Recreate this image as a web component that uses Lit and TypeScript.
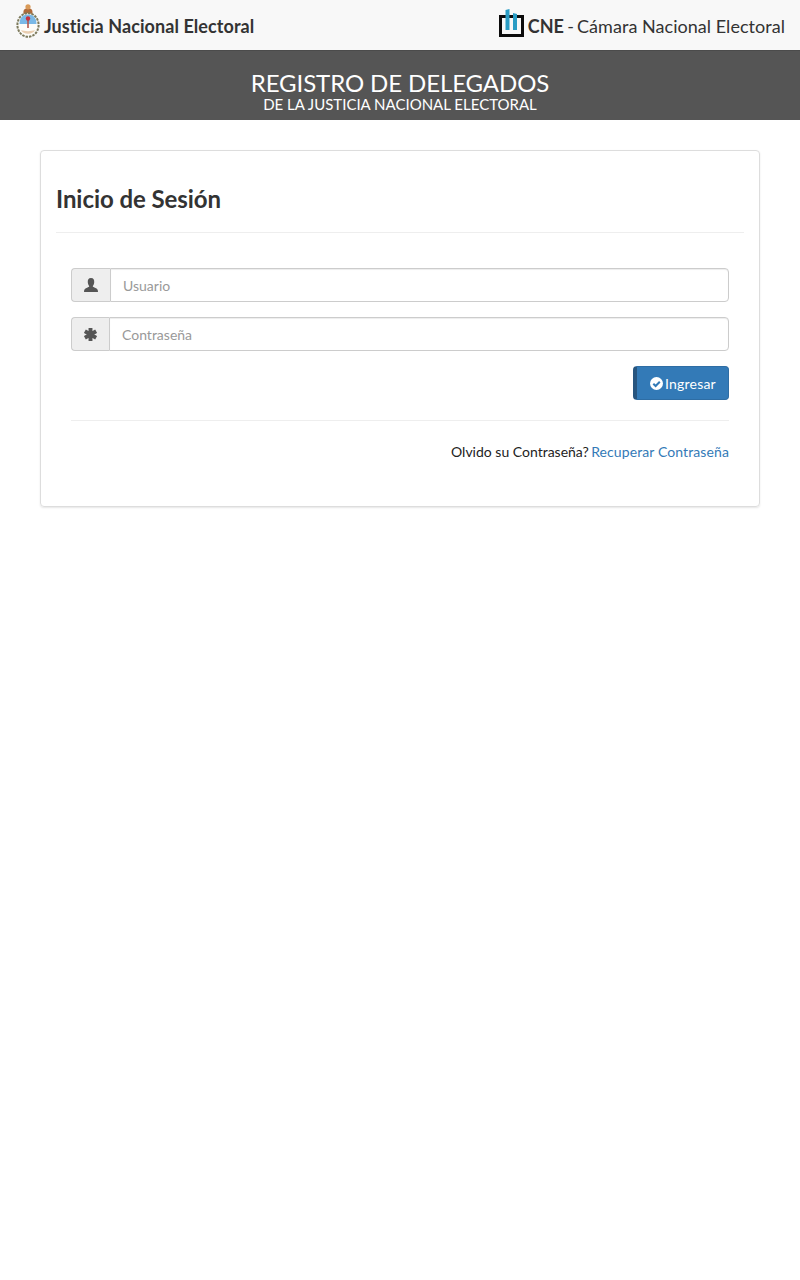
import { LitElement, html, css } from "lit";
import { customElement } from "lit/decorators.js";

@customElement("app-root")
export class AppRoot extends LitElement {
  static styles = css`
    :host { display: block; font-family: Lato, "Liberation Sans", sans-serif; color: #333; background: #fff; min-height: 1280px; font-size: 14px; }
    * { box-sizing: border-box; }
    .top { height: 50px; background: #f8f8f8; display: flex; justify-content: space-between; align-items: center; padding: 0 15px; font-size: 18px; }
    .side { display: flex; align-items: center; }
    .left { gap: 4px; font-weight: 700; margin-top: 1px; padding-left: 1px; letter-spacing: .075px; }
    .left svg { margin-bottom: 9px; }
    .right { gap: 4px; margin-top: 2px; letter-spacing: .04px; }
    .right svg { margin-bottom: 6px; }
    .dash { word-spacing: -1.500px; }
    .banner { height: 70px; background: #555; border-top: 1px solid #4b4b4b; color: #fff; display: flex; flex-direction: column; align-items: center; padding-top: 19px; }
    .b1 { font-size: 24px; line-height: 26px; letter-spacing: -.1px; }
    .b2 { font-size: 15px; line-height: 16px; }
    .card { margin: 30px 40px 0; height: 357px; border: 1px solid #ddd; border-radius: 4px; box-shadow: 0 1px 2px rgba(0,0,0,.1); padding: 0 15px; }
    h1 { margin: 0; height: 82px; padding-top: 33px; font-size: 24px; line-height: 30px; font-weight: 700; border-bottom: 1px solid #eee; color: #333; letter-spacing: -.06px; }
    .form { padding: 35px 15px 0; display: flex; flex-direction: column; }
    .group { display: flex; height: 34px; margin-bottom: 15px; }
    .addon { background: #eee; border: 1px solid #ccc; border-right: 0; border-radius: 4px 0 0 4px; display: flex; align-items: center; justify-content: center; color: #555; }
    .a1 { width: 39px; }
    .a2 { width: 38px; }
    input { flex: 1; min-width: 0; height: 34px; border: 1px solid #ccc; border-radius: 0 4px 4px 0; box-shadow: inset 0 1px 1px rgba(0,0,0,.075); padding: 6px 12px; font: 14px Lato, sans-serif; color: #555; background: #fff; outline: none; }
    input::placeholder { color: #999; opacity: 1; }
    .actions { display: flex; justify-content: flex-end; }
    button { width: 96px; height: 34px; border: 1px solid #2e6da4; border-left: 4px solid #27557f; border-radius: 4px; background: #337ab7; color: #fff; font: 14px Lato, sans-serif; letter-spacing: .2px; display: flex; align-items: center; justify-content: center; gap: 2px; padding: 0 0 0 1px; }
    hr { width: 100%; border: 0; border-top: 1px solid #eee; margin: 20px 0 0; }
    .forgot { text-align: right; margin-top: 21px; line-height: 20px; color: #222; }
    a { color: #337ab7; text-decoration: none; letter-spacing: .1px; margin-left: -1.200px; }
  `;

  render() {
    return html`
      <header class="top">
        <div class="side left">
          <svg width="24" height="34" viewBox="0 0 24 34">
            <path d="M7.500 10 C7 4 9.500 5 12 4 C14.500 5 17 4 16.500 10 Z" fill="#b06a3a"/>
            <circle cx="12" cy="2.800" r="2.600" fill="#d99a58"/>
            <ellipse cx="12" cy="21" rx="10.600" ry="11.800" fill="#fdfcf8" stroke="#7d7a5c" stroke-width="2" stroke-dasharray="2.500 1"/>
            <path d="M3.500 20 C3.500 13.500 7 10.500 12 10.500 C17 10.500 20.500 13.500 20.500 20 Z" fill="#7ab8e6"/>
            <path d="M5 26 C7 31 17 31 19 26 C16 27.500 8 27.500 5 26 Z" fill="#e9cdb0"/>
            <rect x="11.200" y="13" width="1.600" height="11" fill="#b5584a"/>
            <circle cx="12" cy="14.500" r="2.200" fill="#c8303f"/>
          </svg>
          <span>Justicia Nacional Electoral</span>
        </div>
        <div class="side right">
          <svg width="25" height="28" viewBox="0 0 25 28">
            <rect x="1.500" y="7.500" width="22" height="19" fill="none" stroke="#0c0c0c" stroke-width="3"/>
            <path d="M6.500 1 L10.500 0 V21 H6.500 Z" fill="#2a9cc4"/>
            <path d="M14 4 L18 5 V21 H14 Z" fill="#2a9cc4"/>
          </svg>
          <span><b>CNE</b><span class="dash"> - </span>Cámara Nacional Electoral</span>
        </div>
      </header>
      <section class="banner">
        <div class="b1">REGISTRO DE DELEGADOS</div>
        <div class="b2">DE LA JUSTICIA NACIONAL ELECTORAL</div>
      </section>
      <main class="card">
        <h1>Inicio de Sesión</h1>
        <div class="form">
          <div class="group">
            <span class="addon a1">
              <svg width="14" height="14" viewBox="0 0 14 14" fill="#555"><path d="M7 0 C9.500 0 10.500 2 10.200 4.500 C10 6.300 9.300 7.300 8.800 8 C8.700 9 10 9.300 11.500 10 C13 10.700 14 11.200 14 14 H0 C0 11.200 1 10.700 2.500 10 C4 9.300 5.300 9 5.200 8 C4.700 7.300 4 6.300 3.800 4.500 C3.500 2 4.500 0 7 0 Z"/></svg>
            </span>
            <input placeholder="Usuario" />
          </div>
          <div class="group">
            <span class="addon a2">
              <svg width="13" height="13" viewBox="0 0 12 12" stroke="#555" stroke-width="3.600"><path d="M6 0 V12 M0.800 3 L11.200 9 M11.200 3 L0.800 9"/></svg>
            </span>
            <input placeholder="Contraseña" />
          </div>
          <div class="actions">
            <button>
              <svg width="13" height="13" viewBox="0 0 13 13"><circle cx="6.500" cy="6.500" r="6.500" fill="#fff"/><path d="M3.300 6.700 L5.600 9 L9.800 4.700" fill="none" stroke="#337ab7" stroke-width="2"/></svg>
              Ingresar
            </button>
          </div>
          <hr />
          <div class="forgot">Olvido su Contraseña? <a href="#">Recuperar Contraseña</a></div>
        </div>
      </main>
    `;
  }
}
